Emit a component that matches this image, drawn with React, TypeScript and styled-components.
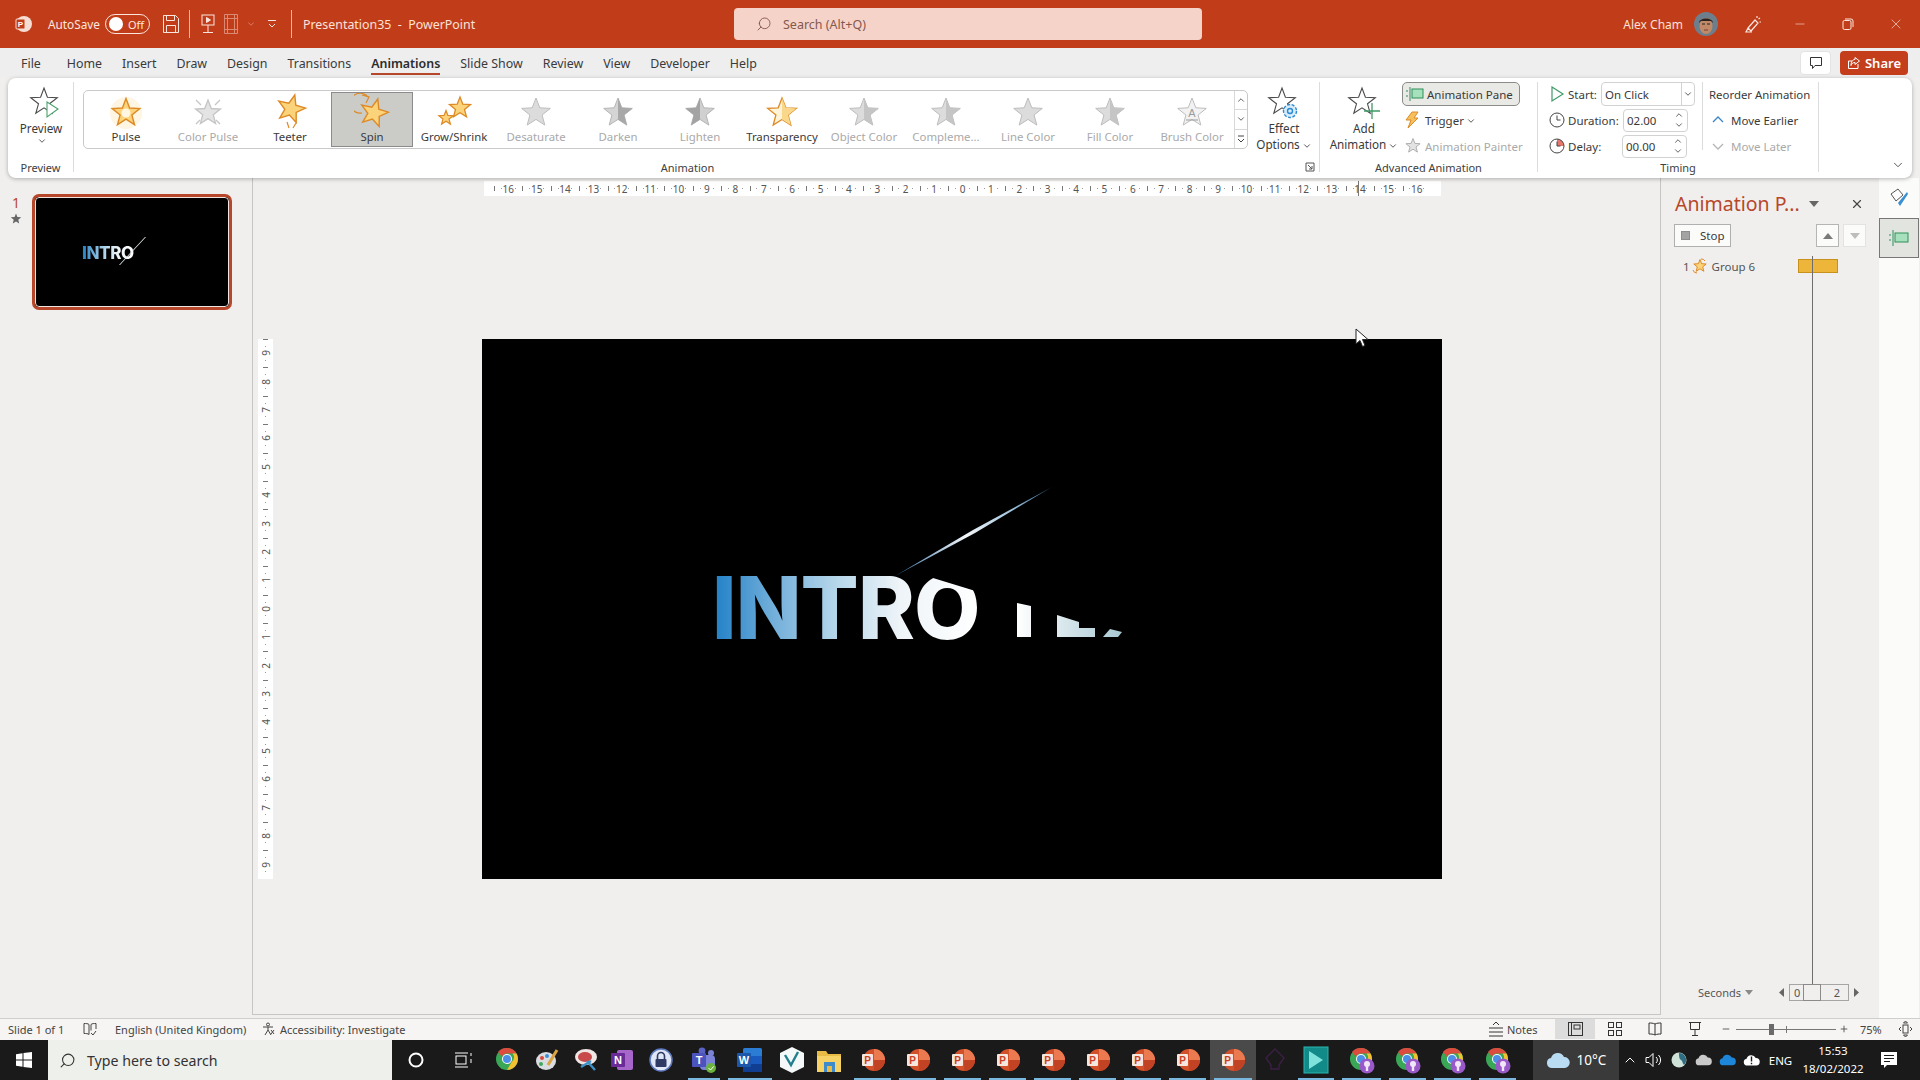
import React from "react";
import styled, { createGlobalStyle } from "styled-components";
import { Search, Minus, X, ChevronDown, ChevronUp, Plus } from "lucide-react";

const FONT = `"Noto Sans", "Open Sans", "Liberation Sans", sans-serif`;
const RED = "#c13d19";
const ACCENT = "#b7472a";
const INK = "#3a3a3a";
const MUTED = "#a9a9a9";

const Global = createGlobalStyle`
  html, body { margin: 0; padding: 0; background: #f0efed; }
  body { font-family: ${FONT}; font-size: 12px; color: ${INK}; overflow: hidden; }
  #root { width: 1920px; height: 1080px; }
  * { box-sizing: border-box; }
`;

const Page = styled.div`
  width: 1920px;
  height: 1080px;
  display: flex;
  flex-direction: column;
  background: #f0efed;
`;

/* ---------- Title bar ---------- */
const TitleBar = styled.header`
  height: 48px;
  flex: none;
  background: ${RED};
  color: #fbe6df;
  display: grid;
  grid-template-columns: 734px 468px 1fr;
  align-items: center;
`;
const TitleLeft = styled.div`
  display: flex;
  align-items: center;
  height: 100%;
  padding-left: 14px;
`;
const AutoSave = styled.span`
  margin: 0 7px 0 14px;
  font-size: 11.8px;
  width: 50px;
  white-space: nowrap;
`;
const Toggle = styled.div`
  width: 45px;
  height: 20px;
  border: 1px solid #fbe6df;
  border-radius: 10px;
  display: flex;
  align-items: center;
  gap: 5px;
  padding-left: 3px;
  font-size: 11px;
  margin-right: 10px;
`;
const ToggleKnob = styled.i`
  width: 14px;
  height: 14px;
  border-radius: 50%;
  background: #fff;
`;
const TitleCell = styled.div<{ $w: number; $dim?: boolean }>`
  width: ${(p) => p.$w}px;
  height: 100%;
  flex: none;
  display: flex;
  align-items: center;
  justify-content: center;
  opacity: ${(p) => (p.$dim ? 0.45 : 1)};
`;
const TitleDivider = styled.i<{ $mx: string }>`
  width: 1px;
  height: 28px;
  background: #eeb7a6;
  margin: ${(p) => p.$mx};
`;
const DocName = styled.span`
  font-size: 12.4px;
  white-space: pre;
  color: #fbe1d8;
`;
const SearchBox = styled.div`
  height: 32px;
  background: #f6d3c9;
  border-radius: 4px;
  display: flex;
  align-items: center;
  gap: 11px;
  padding-left: 22px;
  color: #84594e;
  font-size: 12.5px;
`;
const TitleRight = styled.div`
  display: flex;
  justify-content: flex-end;
  align-items: center;
  height: 100%;
`;
const UserName = styled.span`
  font-size: 12px;
  margin-right: 11px;
  color: #fbe1d8;
`;
const Avatar = styled.div`
  width: 24px;
  height: 24px;
  margin-right: 12px;
  border-radius: 50%;
  overflow: hidden;
  flex: none;
`;

/* ---------- Tabs ---------- */
const TabRow = styled.nav`
  height: 30px;
  flex: none;
  background: #eeeeee;
  display: flex;
  align-items: center;
  padding: 0 12px 0 11px;
`;
const Tab = styled.div<{ $active?: boolean }>`
  position: relative;
  height: 100%;
  display: flex;
  align-items: center;
  padding: 0 10px;
  font-size: 12.4px;
  font-weight: ${(p) => (p.$active ? 600 : 400)};
  color: ${(p) => (p.$active ? "#2c2c2c" : INK)};
  &:first-child {
    margin-right: 6px;
  }
  &::after {
    content: "";
    display: ${(p) => (p.$active ? "block" : "none")};
    position: absolute;
    left: 10px;
    right: 10px;
    bottom: 3px;
    height: 2px;
    background: ${ACCENT};
  }
`;
const TabActions = styled.div`
  margin-left: auto;
  display: flex;
  gap: 9px;
  align-items: center;
`;
const CommentButton = styled.button`
  width: 31px;
  height: 24px;
  padding: 0;
  background: #fff;
  border: 1px solid #e3e3e3;
  border-radius: 4px;
  display: flex;
  align-items: center;
  justify-content: center;
`;
const ShareButton = styled.button`
  width: 68px;
  height: 24px;
  padding: 0;
  background: #c43e1c;
  border: 0;
  border-radius: 4px;
  color: #fff;
  font: 600 13px ${FONT};
  display: flex;
  align-items: center;
  justify-content: center;
  gap: 4px;
`;

/* ---------- Ribbon ---------- */
const Ribbon = styled.section`
  position: relative;
  z-index: 2;
  height: 100px;
  flex: none;
  margin: 0 8px;
  padding: 4px 0 6px;
  background: #fff;
  border-radius: 8px;
  box-shadow: 0 1px 4px rgba(0, 0, 0, 0.28);
  display: flex;
`;
const Group = styled.div<{ $w: number }>`
  width: ${(p) => p.$w}px;
  flex: none;
  border-right: 1px solid #dcdcdc;
  display: flex;
  flex-direction: column;
`;
const GroupBody = styled.div<{ $pad?: string }>`
  flex: 1;
  display: flex;
  padding: ${(p) => p.$pad || 0};
  min-height: 0;
`;
const GroupFoot = styled.div`
  height: 16px;
  margin-bottom: -3px;
  display: flex;
  align-items: center;
`;
const GroupLabel = styled.span`
  flex: 1;
  text-align: center;
  font-size: 11px;
  color: #404040;
`;
const Launcher = styled.div`
  width: 18px;
  flex: none;
  display: flex;
  justify-content: center;
`;
const LargeButton = styled.div<{ $w: number; $ml?: number; $mt?: number }>`
  width: ${(p) => p.$w}px;
  margin-left: ${(p) => p.$ml || 0}px;
  margin-top: ${(p) => p.$mt || 0}px;
  flex: none;
  display: flex;
  flex-direction: column;
  align-items: center;
  font-size: 11.7px;
  line-height: 16px;
  color: ${INK};
  white-space: nowrap;
`;
const LargeIcon = styled.div`
  height: 38px;
  padding-top: 1px;
  display: flex;
  align-items: center;
  justify-content: center;
`;
const Caret = styled.span`
  display: inline-flex;
  vertical-align: middle;
  margin-left: 2px;
`;
const Gallery = styled.div`
  width: 1165px;
  height: 59px;
  flex: none;
  border: 1px solid #c9c9c9;
  border-radius: 5px;
  display: flex;
  align-items: center;
  padding-left: 1px;
`;
const GalleryItem = styled.div<{ $selected?: boolean; $off?: boolean }>`
  width: 82px;
  height: 55px;
  flex: none;
  display: flex;
  flex-direction: column;
  align-items: center;
  justify-content: flex-end;
  padding-bottom: 1px;
  font-size: 11.4px;
  line-height: 16px;
  white-space: nowrap;
  color: ${(p) => (p.$off ? MUTED : INK)};
  background: ${(p) => (p.$selected ? "#cbccc8" : "transparent")};
  border: 1px solid ${(p) => (p.$selected ? "#8b8b8b" : "transparent")};
`;
const GalleryScroll = styled.div`
  margin-left: auto;
  width: 13px;
  height: 100%;
  flex: none;
  display: flex;
  flex-direction: column;
  border-left: 1px solid #d8d8d8;
`;
const ScrollCell = styled.div`
  flex: 1;
  display: flex;
  align-items: center;
  justify-content: center;
  color: #444;
  & + & {
    border-top: 1px solid #d8d8d8;
  }
`;
const RowStack = styled.div<{ $ml?: number }>`
  display: flex;
  flex-direction: column;
  gap: 2px;
  margin-left: ${(p) => p.$ml || 0}px;
`;
const PaneButton = styled.div`
  width: 118px;
  height: 24px;
  flex: none;
  background: #e9e9e5;
  border: 1px solid #8b8b8b;
  border-radius: 5px;
  display: flex;
  align-items: center;
  gap: 3px;
  padding-left: 3px;
  font-size: 11.5px;
  white-space: nowrap;
`;
const CmdRow = styled.div<{ $off?: boolean; $gap?: number }>`
  height: 24px;
  flex: none;
  display: flex;
  align-items: center;
  gap: ${(p) => p.$gap ?? 4}px;
  padding-left: 3px;
  font-size: 11.5px;
  white-space: nowrap;
  color: ${(p) => (p.$off ? MUTED : INK)};
`;
const TimingLabel = styled.div<{ $w: number }>`
  width: ${(p) => p.$w}px;
  flex: none;
  height: 24px;
  display: flex;
  align-items: center;
  gap: 3px;
  font-size: 11.5px;
  white-space: nowrap;
`;
const TimingRow = styled.div`
  display: flex;
  height: 24px;
  flex: none;
  align-items: center;
`;
const SelectBox = styled.div`
  width: 94px;
  height: 24px;
  border: 1px solid #d2d2d2;
  border-radius: 4px;
  display: flex;
  align-items: center;
  padding-left: 3px;
  font-size: 11.5px;
`;
const SelectArrow = styled.div`
  margin-left: auto;
  width: 13px;
  height: 100%;
  border-left: 1px solid #d2d2d2;
  display: flex;
  align-items: center;
  justify-content: center;
`;
const NumField = styled.div`
  width: 65px;
  height: 23px;
  border: 1px solid #d2d2d2;
  border-radius: 4px;
  display: flex;
  align-items: center;
  padding-left: 3px;
  font-size: 11.5px;
`;
const Spin = styled.div`
  margin-left: auto;
  width: 16px;
  display: flex;
  flex-direction: column;
  align-items: center;
  color: #444;
`;
const ReorderStack = styled.div`
  margin-left: 7px;
  height: 68px;
  padding-left: 6px;
  border-left: 1px solid #dcdcdc;
  display: flex;
  flex-direction: column;
  gap: 2px;
`;
const ReorderTitle = styled.div`
  height: 24px;
  flex: none;
  display: flex;
  align-items: center;
  font-size: 11.4px;
  white-space: nowrap;
`;
const CollapseBtn = styled.div`
  position: absolute;
  right: 7px;
  bottom: 6px;
  display: flex;
  color: #444;
`;

/* ---------- Main area ---------- */
const Main = styled.main`
  flex: 1;
  display: flex;
  min-height: 0;
`;
const ThumbPanel = styled.aside`
  width: 252px;
  flex: none;
  display: flex;
  align-items: flex-start;
  padding: 16px 0 0 9px;
  gap: 9px;
`;
const ThumbMeta = styled.div`
  width: 14px;
  display: flex;
  flex-direction: column;
  align-items: center;
  color: ${ACCENT};
  font-size: 14px;
  line-height: 18px;
  gap: 1px;
`;
const Thumb = styled.div`
  position: relative;
  width: 200px;
  height: 116px;
  border: 3px solid ${ACCENT};
  border-radius: 7px;
  background: #000;
  overflow: hidden;
  &::after {
    content: "";
    position: absolute;
    inset: 0;
    border: 1px solid #f4e6e0;
    border-radius: 4px;
  }
`;
const gradient = `linear-gradient(90deg, #1f7fc6 0%, #6fadd9 22%, #b5d6ea 46%, #eef4f8 70%, #fff 100%)`;
const ThumbText = styled.span`
  position: absolute;
  left: 47px;
  top: 46px;
  font: 800 17px/20px Inter, "Liberation Sans", sans-serif;
  letter-spacing: -0.4px;
  background: ${gradient};
  -webkit-background-clip: text;
  background-clip: text;
  color: transparent;
`;
const Overlay = styled.svg`
  position: absolute;
  inset: 0;
  width: 100%;
  height: 100%;
`;
const Editor = styled.div`
  position: relative;
  width: 1409px;
  flex: none;
  margin-bottom: 3px;
  padding-top: 3px;
  border-left: 1px solid #c6c6c4;
  border-right: 1px solid #c6c6c4;
  border-bottom: 1px solid #c6c6c4;
`;
const HRuler = styled.div`
  position: relative;
  margin-left: 231px;
  width: 957px;
  height: 15px;
  background: #fff;
  display: flex;
  justify-content: center;
`;
const HCell = styled.span`
  width: 28.4px;
  flex: none;
  text-align: center;
  font-size: 10px;
  line-height: 16px;
  color: #555;
  background:
    linear-gradient(#777, #777) left 5px / 1px 5px no-repeat,
    linear-gradient(#999, #999) 25% 7px / 1px 1px no-repeat,
    linear-gradient(#999, #999) 75% 7px / 1px 1px no-repeat;
`;
const RulerMark = styled.i`
  position: absolute;
  left: 874px;
  top: 0;
  width: 1px;
  height: 15px;
  background: #777;
`;
const ViewRow = styled.div`
  display: flex;
  margin-top: 143px;
`;
const VRuler = styled.div`
  margin-left: 5px;
  width: 15px;
  height: 540px;
  background: #fff;
  display: flex;
  flex-direction: column;
`;
const VCell = styled.span`
  height: 28.42px;
  flex: none;
  display: flex;
  align-items: center;
  justify-content: center;
  font-size: 10px;
  color: #555;
  background:
    linear-gradient(#777, #777) 5px top / 5px 1px no-repeat,
    linear-gradient(#999, #999) 7px 25% / 1px 1px no-repeat,
    linear-gradient(#999, #999) 7px 75% / 1px 1px no-repeat;
  & > b {
    font-weight: 400;
    transform: rotate(-90deg);
  }
`;
const Slide = styled.div`
  position: relative;
  margin-left: 209px;
  width: 960px;
  height: 540px;
  background: #000;
  overflow: hidden;
`;
const SlideText = styled.span`
  position: absolute;
  left: 230px;
  top: 226px;
  font: 800 86px/86px Inter, "Liberation Sans", sans-serif;
  letter-spacing: -0.9px;
  background: ${gradient};
  -webkit-background-clip: text;
  background-clip: text;
  color: transparent;
`;
const Cursor = styled.svg`
  position: absolute;
  left: 1102px;
  top: 150px;
`;
const AnimPane = styled.aside`
  position: relative;
  width: 218px;
  flex: none;
  padding-bottom: 17px;
  display: flex;
  flex-direction: column;
`;
const PaneHead = styled.div`
  height: 46px;
  padding: 5px 0 0 14px;
  display: flex;
  align-items: center;
`;
const PaneTitle = styled.span`
  font-size: 19.5px;
  color: ${ACCENT};
  white-space: nowrap;
  width: 134px;
`;
const PaneClose = styled.span`
  margin-left: 31px;
  display: flex;
  color: #444;
`;
const PaneTools = styled.div`
  display: flex;
  padding: 0 13px 0 13px;
  align-items: center;
`;
const StopButton = styled.div`
  width: 58px;
  height: 23px;
  border: 1px solid #b0b0b0;
  background: #fbfbfa;
  display: flex;
  align-items: center;
  gap: 10px;
  padding-left: 6px;
  font-size: 11.5px;
`;
const StopSquare = styled.i`
  width: 9px;
  height: 9px;
  background: #a3a3a3;
  border: 1px solid #8d8d8d;
`;
const ArrowButton = styled.div<{ $off?: boolean; $ml?: number }>`
  width: 23px;
  height: 23px;
  margin-left: ${(p) => p.$ml || 0}px;
  background: #fbfbfa;
  border: 1px solid ${(p) => (p.$off ? "#e3e3e3" : "#b5b5b5")};
  display: flex;
  align-items: center;
  justify-content: center;
`;
const PaneRow = styled.div`
  margin-top: 8px;
  height: 22px;
  display: flex;
  align-items: center;
  padding-left: 22px;
  font-size: 11.5px;
  color: #555;
`;
const PaneIndex = styled.span`
  margin-right: 1px;
`;
const PaneItem = styled.span`
  margin-left: 5px;
  width: 86px;
`;
const TimeBar = styled.i`
  width: 40px;
  height: 14px;
  background: #edb63a;
  border: 1px solid #c8901c;
`;
const TimeLine = styled.i`
  position: absolute;
  left: 151px;
  top: 78px;
  width: 1px;
  bottom: 33px;
  background: #6e6e6e;
`;
const PaneFoot = styled.div`
  margin-top: auto;
  height: 18px;
  display: flex;
  align-items: center;
  padding-left: 37px;
  font-size: 11px;
  color: #555;
`;
const SecondsCaret = styled.svg`
  margin: 0 26px 0 4px;
`;
const TimeScale = styled.div`
  position: relative;
  width: 60px;
  height: 17px;
  margin: 0 5px;
  background: #f0efed;
  border: 1px solid #a5a5a5;
  display: flex;
  align-items: center;
  justify-content: space-between;
  padding: 0 8px 0 4px;
  font-size: 11px;
  &::after {
    content: "";
    position: absolute;
    left: 13px;
    top: -1px;
    bottom: -1px;
    width: 16px;
    border: 1px solid #8a8a8a;
  }
`;
const SideStrip = styled.aside`
  width: 40px;
  flex: none;
  background: #fbfbf9;
  display: flex;
  flex-direction: column;
`;
const StripTool = styled.div<{ $active?: boolean }>`
  height: 40px;
  background: ${(p) => (p.$active ? "#e2e5df" : "transparent")};
  border: 1px solid ${(p) => (p.$active ? "#777" : "transparent")};
  display: flex;
  align-items: center;
  justify-content: center;
`;

/* ---------- Status bar ---------- */
const StatusBar = styled.footer`
  height: 22px;
  flex: none;
  background: #f6f5f3;
  border-top: 1px solid #cfcfcd;
  display: flex;
  align-items: center;
  font-size: 11px;
  color: #444;
  padding: 0 3px 1px 8px;
`;
const StatusText = styled.span<{ $ml?: number; $w?: number }>`
  margin-left: ${(p) => p.$ml || 0}px;
  ${(p) => (p.$w ? `width: ${p.$w}px;` : "")}
  white-space: nowrap;
`;
const StatusIcon = styled.span<{ $w: number; $active?: boolean }>`
  width: ${(p) => p.$w}px;
  height: 100%;
  flex: none;
  display: flex;
  align-items: center;
  justify-content: center;
  background: ${(p) => (p.$active ? "#dcdcdc" : "transparent")};
`;
const StatusRight = styled.div`
  margin-left: auto;
  height: 100%;
  display: flex;
  align-items: center;
`;
const Slider = styled.div`
  position: relative;
  width: 100px;
  height: 1px;
  background: #777;
  &::before {
    content: "";
    position: absolute;
    left: 33px;
    top: -5px;
    width: 5px;
    height: 11px;
    background: #6a6a6a;
  }
  &::after {
    content: "";
    position: absolute;
    left: 50px;
    top: -3px;
    width: 1px;
    height: 7px;
    background: #777;
  }
`;

/* ---------- Taskbar ---------- */
const Taskbar = styled.div`
  height: 40px;
  flex: none;
  background: #1a1a1a;
  display: flex;
  align-items: stretch;
  color: #fff;
`;
const TaskSearch = styled.div`
  width: 344px;
  flex: none;
  background: #eef0ec;
  color: #333;
  display: flex;
  align-items: center;
  gap: 11px;
  padding-left: 11px;
  font-size: 14.2px;
`;
const TaskCell = styled.div<{ $w: number; $run?: boolean; $active?: boolean }>`
  position: relative;
  width: ${(p) => p.$w}px;
  flex: none;
  display: flex;
  align-items: center;
  justify-content: center;
  background: ${(p) => (p.$active ? "#4a4a4a" : "transparent")};
  &::after {
    content: "";
    display: ${(p) => (p.$run ? "block" : "none")};
    position: absolute;
    left: 4px;
    right: 4px;
    bottom: 0;
    height: 2px;
    background: #7ab8e0;
  }
`;
const Weather = styled.div`
  width: 86px;
  margin-left: 13px;
  flex: none;
  background: #3a3a3a;
  display: flex;
  align-items: center;
  justify-content: center;
  gap: 7px;
  font-size: 13.5px;
`;
const TrayCell = styled.div<{ $w: number }>`
  width: ${(p) => p.$w}px;
  flex: none;
  display: flex;
  align-items: center;
  justify-content: center;
  font-size: 11.5px;
`;
const Clock = styled.div`
  width: 70px;
  flex: none;
  display: flex;
  flex-direction: column;
  justify-content: center;
  align-items: center;
  font-size: 11.5px;
  line-height: 18px;
`;

/* ---------- Drawn icons ---------- */
const ptList = (cx: number, cy: number, R: number, r: number, rot = 0) =>
  Array.from({ length: 10 }, (_, i) => {
    const a = ((-90 + rot + i * 36) * Math.PI) / 180;
    const rad = i % 2 ? r : R;
    return `${(cx + rad * Math.cos(a)).toFixed(1)},${(cy + rad * Math.sin(a)).toFixed(1)}`;
  });
const pts = (cx: number, cy: number, R: number, r: number, rot = 0) => ptList(cx, cy, R, r, rot).join(" ");

const ORANGE = { fill: "#fbd37a", stroke: "#dd8a26" };
const GRAY = { fill: "#dcdcdc", stroke: "#bdbdbd" };
const BASE = ptList(18, 20, 15, 6.4);
const RIGHT_HALF = BASE.slice(0, 6).join(" ");
const LEFT_HALF = [BASE[0], ...BASE.slice(5)].join(" ");

const StarGlyph = ({ kind }: { kind: string }) => {
  switch (kind) {
    case "pulse":
      return (
        <svg width="36" height="36">
          <circle cx="18" cy="20" r="16" fill="#fdf1d6" opacity={0.7} />
          <polygon points={pts(18, 20, 14.5, 6.2)} fill={ORANGE.fill} stroke={ORANGE.stroke} strokeWidth="1.4" />
          <circle cx="18" cy="20" r="4.5" fill="#fff7e2" />
        </svg>
      );
    case "colorPulse":
      return (
        <svg width="36" height="36" stroke="#c5c5c5" strokeWidth="1.3">
          <polygon points={pts(18, 20, 13, 5.6)} fill="#e4e4e4" />
          <path d="M6 7l5 5M30 7l-5 5M6 31l4-4M30 31l-4-4" fill="none" />
        </svg>
      );
    case "teeter":
      return (
        <svg width="36" height="36">
          <polygon points={pts(19, 16, 14.5, 6.2, 15)} fill={ORANGE.fill} stroke={ORANGE.stroke} strokeWidth="1.4" />
          <path d="M15 29l2 6M24 30l-3 5" stroke={ORANGE.stroke} strokeWidth="1.2" fill="none" />
        </svg>
      );
    case "spin":
      return (
        <svg width="36" height="36">
          <path d="M14 4 a10 10 0 1 0 -6 16" fill="none" stroke={ORANGE.stroke} strokeWidth="1.2" />
          <path d="M8 2 l7 2 -3 6" fill="none" stroke={ORANGE.stroke} strokeWidth="1.2" />
          <polygon points={pts(20, 20, 14.5, 6.2, 15)} fill={ORANGE.fill} stroke={ORANGE.stroke} strokeWidth="1.4" />
        </svg>
      );
    case "grow":
      return (
        <svg width="36" height="36">
          <polygon points={pts(24, 15, 11, 4.7)} fill={ORANGE.fill} stroke={ORANGE.stroke} strokeWidth="1.3" />
          <polygon points={pts(10, 25, 7.5, 3.2)} fill={ORANGE.fill} stroke={ORANGE.stroke} strokeWidth="1.2" />
        </svg>
      );
    case "transparency":
      return (
        <svg width="36" height="36">
          <polygon points={BASE.join(" ")} fill="#fff3d8" stroke={ORANGE.stroke} strokeWidth="1.3" />
          <polygon points={RIGHT_HALF} fill="#f9d88c" />
        </svg>
      );
    case "darken":
      return (
        <svg width="36" height="36">
          <polygon points={BASE.join(" ")} fill="#d5d5d5" stroke="#b5b5b5" />
          <polygon points={RIGHT_HALF} fill="#a8a8a8" />
        </svg>
      );
    case "lighten":
      return (
        <svg width="36" height="36">
          <polygon points={BASE.join(" ")} fill="#d0d0d0" stroke="#b5b5b5" />
          <polygon points={LEFT_HALF} fill="#a3a3a3" />
        </svg>
      );
    case "brush":
      return (
        <svg width="36" height="36">
          <polygon points={BASE.join(" ")} fill="#f2f2f2" stroke="#bdbdbd" />
          <text x="18" y="24" textAnchor="middle" fontSize="11" fontFamily="Liberation Sans" fill="#9b9b9b">A</text>
          <path d="M12 27h12" stroke="#9b9b9b" />
        </svg>
      );
    default:
      return (
        <svg width="36" height="36">
          <polygon points={BASE.join(" ")} fill={GRAY.fill} stroke={GRAY.stroke} />
          {kind === "half" && <polygon points={RIGHT_HALF} fill="#c5c5c5" />}
        </svg>
      );
  }
};

const CommandStar = ({ over, cx = 18 }: { over?: React.ReactNode; cx?: number }) => (
  <svg width="40" height="36">
    <polygon points={pts(cx, 18, 14, 5.8)} fill="#fff" stroke="#4a4a4a" strokeWidth="1.1" />
    {over}
  </svg>
);

const Tiny = ({ up }: { up?: boolean }) =>
  up ? <ChevronUp size={10} strokeWidth={2} /> : <ChevronDown size={10} strokeWidth={2} />;

const PptBall = () => (
  <svg width="24" height="26" viewBox="0 0 24 26">
    <circle cx="13" cy="13" r="11" fill="#d2502a" />
    <path d="M13 2a11 11 0 0 1 11 11H13z" fill="#ec7a50" />
    <path d="M13 13h11a11 11 0 0 1-11 11z" fill="#c24324" />
    <rect x="1" y="7" width="11" height="12" rx="1" fill="#f5e6de" />
    <text x="6.5" y="17" textAnchor="middle" fontSize="10" fontWeight="700" fontFamily="Liberation Sans" fill="#c9411f">P</text>
  </svg>
);

const ChromeBall = ({ badge }: { badge?: boolean }) => (
  <svg width="26" height="28" viewBox="0 0 26 28">
    <circle cx="12" cy="13" r="11" fill="#3aa757" />
    <path d="M12 2a11 11 0 0 1 9.5 5.5H12a5.5 5.5 0 0 0-5 3.2L3 6a11 11 0 0 1 9-4z" fill="#dd4b3e" />
    <path d="M21.5 7.5A11 11 0 0 1 12 24l4.8-8.2a5.5 5.5 0 0 0 .7-8.3z" fill="#f2c230" />
    <circle cx="12" cy="13" r="5" fill="#fff" />
    <circle cx="12" cy="13" r="4" fill="#4c8ee8" />
    {badge && (
      <>
        <circle cx="18" cy="20" r="7.5" fill="#9a59c9" />
        <circle cx="18" cy="18" r="3" fill="#f1e6f7" />
        <rect x="16.8" y="20" width="2.4" height="5" fill="#f1e6f7" />
      </>
    )}
  </svg>
);

const CloudShape = ({ w, fill }: { w: number; fill: string }) => (
  <svg width={w} height={(w * 2) / 3} viewBox="0 0 24 16">
    <path d="M6 16a5 5 0 0 1-1-9.9A7 7 0 0 1 18 5a5.5 5.5 0 0 1 .5 11z" fill={fill} />
  </svg>
);

const tasks: { w: number; run?: boolean; active?: boolean; icon: React.ReactNode }[] = [
  { w: 48, icon: <svg width="20" height="20"><circle cx="10" cy="10" r="6.5" fill="none" stroke="#fff" strokeWidth="2" /></svg> },
  { w: 46, icon: <svg width="20" height="20" stroke="#fff" fill="none"><rect x="3" y="6" width="10" height="8" /><path d="M2 3h13M2 17h13M18 3v3M18 9v4" /></svg> },
  { w: 44, icon: <ChromeBall /> },
  { w: 34, icon: <svg width="26" height="26" viewBox="0 0 26 26"><ellipse cx="12" cy="14" rx="10" ry="9" fill="#d9dde2" /><circle cx="8" cy="11" r="2" fill="#d6493a" /><circle cx="13" cy="9" r="2" fill="#3f8ed6" /><circle cx="7" cy="17" r="2" fill="#3fa85a" /><path d="M14 18L23 3" stroke="#d9a441" strokeWidth="3" /></svg> },
  { w: 44, icon: <svg width="26" height="26" viewBox="0 0 26 26"><ellipse cx="13" cy="10" rx="11" ry="8" fill="#f0e6e4" /><ellipse cx="12" cy="10" rx="7" ry="5" fill="#c94a4a" /><path d="M14 14l8 9M8 20l10-6" stroke="#3d93c9" strokeWidth="2.4" /></svg> },
  { w: 30, icon: <svg width="24" height="24" viewBox="0 0 24 24"><rect x="6" y="2" width="16" height="20" rx="2" fill="#a766c9" /><rect x="0" y="5" width="14" height="14" rx="1" fill="#6a2b96" /><text x="7" y="16" textAnchor="middle" fontSize="11" fontWeight="700" fontFamily="Liberation Sans" fill="#fff">N</text></svg> },
  { w: 46, icon: <svg width="24" height="26" viewBox="0 0 24 26"><circle cx="12" cy="13" r="11" fill="#dfe6f5" stroke="#5d78c0" strokeWidth="1.5" /><rect x="6.5" y="12" width="11" height="8" rx="1" fill="#2e3a63" /><path d="M8.5 12V9a3.5 3.5 0 0 1 7 0v3" fill="none" stroke="#2e3a63" strokeWidth="1.6" /></svg> },
  { w: 40, run: true, icon: <svg width="26" height="28" viewBox="0 0 26 28"><circle cx="20" cy="7" r="3" fill="#7b83d8" /><circle cx="11" cy="5" r="3.4" fill="#5a62c3" /><rect x="9" y="9" width="15" height="15" rx="4" fill="#7b83d8" /><rect x="1" y="7" width="14" height="14" rx="1" fill="#4b53bc" /><text x="8" y="18" textAnchor="middle" fontSize="11" fontWeight="700" fontFamily="Liberation Sans" fill="#fff">T</text><circle cx="20" cy="22" r="5" fill="#6bb33e" /><path d="M17.5 22l2 2 3.2-3.6" stroke="#fff" fill="none" /></svg> },
  { w: 52, run: true, icon: <svg width="26" height="26" viewBox="0 0 26 26"><rect x="6" y="1" width="19" height="24" rx="1.5" fill="#2b7cd3" /><rect x="6" y="9" width="19" height="8" fill="#185abd" /><rect x="6" y="17" width="19" height="8" fill="#103f91" /><rect x="0" y="6" width="14" height="14" rx="1" fill="#1c57ac" /><text x="7" y="17" textAnchor="middle" fontSize="11" fontWeight="700" fontFamily="Liberation Sans" fill="#fff">W</text></svg> },
  { w: 32, icon: <svg width="26" height="28" viewBox="0 0 26 28"><polygon points="13,1 25,7 25,21 13,27 1,21 1,7" fill="#f4f8f8" /><path d="M6 9l6 10 7-13" stroke="#22808e" strokeWidth="2.4" fill="none" /></svg> },
  { w: 42, icon: <svg width="26" height="26" viewBox="0 0 26 26"><path d="M1 4h9l2 3h13v18H1z" fill="#e8bb47" /><rect x="1" y="9" width="24" height="16" fill="#f5d166" /><rect x="8" y="15" width="11" height="10" fill="#3f8ac9" /><rect x="11" y="19" width="5" height="6" fill="#e8bb47" /></svg> },
  ...Array.from({ length: 8 }, () => ({ w: 45, run: true, icon: <PptBall /> })),
  { w: 46, run: true, active: true, icon: <PptBall /> },
  { w: 38, icon: <svg width="22" height="26" viewBox="0 0 22 26" fill="none" stroke="#3c1f45" strokeWidth="1.4"><path d="M11 2l9 9-5 7v4H7v-4l-5-7z" /></svg> },
  { w: 44, run: true, icon: <svg width="26" height="28" viewBox="0 0 26 28"><rect x="1" y="1" width="24" height="26" fill="#128a88" stroke="#2bb8b0" /><polygon points="6,5 20,14 6,23" fill="#7fe3dc" /></svg> },
  { w: 47, run: true, icon: <ChromeBall badge /> },
  { w: 45, run: true, icon: <ChromeBall badge /> },
  { w: 45, run: true, icon: <ChromeBall badge /> },
  { w: 45, run: true, icon: <ChromeBall badge /> },
];

const galleryItems: [string, string, boolean, boolean?][] = [
  ["Pulse", "pulse", false],
  ["Color Pulse", "colorPulse", true],
  ["Teeter", "teeter", false],
  ["Spin", "spin", false, true],
  ["Grow/Shrink", "grow", false],
  ["Desaturate", "plain", true],
  ["Darken", "darken", true],
  ["Lighten", "lighten", true],
  ["Transparency", "transparency", false],
  ["Object Color", "half", true],
  ["Compleme...", "half", true],
  ["Line Color", "plain", true],
  ["Fill Color", "half", true],
  ["Brush Color", "brush", true],
];

const tabs = ["File", "Home", "Insert", "Draw", "Design", "Transitions", "Animations", "Slide Show", "Review", "View", "Developer", "Help"];
const hNums = [...Array.from({ length: 17 }, (_, i) => 16 - i), ...Array.from({ length: 16 }, (_, i) => i + 1)];
const vNums = [...Array.from({ length: 10 }, (_, i) => 9 - i), ...Array.from({ length: 9 }, (_, i) => i + 1)];

const StreakStops = () => (
  <>
    <stop offset="0" stopColor="#2f6fa5" />
    <stop offset="0.45" stopColor="#f4f7f9" />
    <stop offset="0.75" stopColor="#9cc2dc" />
    <stop offset="1" stopColor="#24557f" />
  </>
);

export default function App() {
  return (
    <Page>
      <Global />
      <TitleBar>
        <TitleLeft>
          <TitleCell $w={20}>
            <svg width="18" height="18" viewBox="0 0 18 18"><circle cx="9" cy="9" r="8" fill="#f6ddd3" /><rect x="1" y="4" width="9" height="10" rx="1" fill={RED} stroke="#f6ddd3" /><text x="5.5" y="12" textAnchor="middle" fontSize="8" fontWeight="700" fontFamily="Liberation Sans" fill="#fff">P</text></svg>
          </TitleCell>
          <AutoSave>AutoSave</AutoSave>
          <Toggle><ToggleKnob />Off</Toggle>
          <TitleCell $w={22}>
            <svg width="16" height="18" viewBox="0 0 16 18" fill="none" stroke="#fbe6df"><path d="M.5.5h12l3 3v14H.5zM3.5.5v5h8v-5M3.5 17.5v-7h9v7" /></svg>
          </TitleCell>
          <TitleDivider $mx="0 7px 0 7px" />
          <TitleCell $w={22}>
            <svg width="16" height="20" viewBox="0 0 16 20" fill="none" stroke="#fbe6df"><rect x="2" y="1" width="12" height="10" /><path d="M8 11v7M3 18.5h10" /><path d="M6.5 3.5l4 2.5-4 2.5z" fill="#fbe6df" /></svg>
          </TitleCell>
          <TitleCell $w={24} $dim>
            <svg width="14" height="20" viewBox="0 0 14 20" fill="none" stroke="#fbe6df"><path d="M.5.5h13v19H.5zM3.5.5v19M10.5.5v19M.5 4.5h13M.5 15.5h13" /></svg>
          </TitleCell>
          <TitleCell $w={16} $dim><Tiny /></TitleCell>
          <TitleCell $w={25}>
            <svg width="10" height="10" viewBox="0 0 10 10" fill="none" stroke="#fbe6df"><path d="M1 1.5h8M2 5l3 3 3-3" /></svg>
          </TitleCell>
          <TitleDivider $mx="0 11px 0 7px" />
          <DocName>Presentation35  -  PowerPoint</DocName>
        </TitleLeft>
        <SearchBox>
          <Search size={16} strokeWidth={1.4} style={{ transform: "scaleX(-1)" }} />
          Search (Alt+Q)
        </SearchBox>
        <TitleRight>
          <UserName>Alex Cham</UserName>
          <Avatar>
            <svg width="24" height="24" viewBox="0 0 24 24"><rect width="24" height="24" fill="#6d7f8c" /><ellipse cx="12" cy="14" rx="6.5" ry="8" fill="#c08a68" /><path d="M5 11c0-6 14-6 14 0l-2-2H7z" fill="#2a2320" /><path d="M8 12h3M13 12h3" stroke="#2a2320" /><path d="M10 18h4" stroke="#7a3c2f" /></svg>
          </Avatar>
          <TitleCell $w={46}>
            <svg width="18" height="20" viewBox="0 0 18 20" fill="none" stroke="#fbe6df" strokeWidth="1.2"><path d="M11 6l-7 8 3 3 7-8zM4 14l-2 4h6M13 2v2M16 4l-1.5 1M17 8h-1.5" /></svg>
          </TitleCell>
          <TitleCell $w={48}><Minus size={14} strokeWidth={1} /></TitleCell>
          <TitleCell $w={48}>
            <svg width="12" height="12" viewBox="0 0 12 12" fill="none" stroke="#fbe6df"><rect x="1" y="2.5" width="8" height="9" rx="1.5" /><path d="M3 1h6a2 2 0 0 1 2 2v6" /></svg>
          </TitleCell>
          <TitleCell $w={48}><X size={16} strokeWidth={1} /></TitleCell>
        </TitleRight>
      </TitleBar>

      <TabRow>
        {tabs.map((t) => (
          <Tab key={t} $active={t === "Animations"}>{t}</Tab>
        ))}
        <TabActions>
          <CommentButton>
            <svg width="14" height="14" viewBox="0 0 14 14" fill="none" stroke="#333"><path d="M1.5 1.5h11v8H6l-2.5 3v-3h-2z" /></svg>
          </CommentButton>
          <ShareButton>
            <svg width="14" height="14" viewBox="0 0 14 14" fill="none" stroke="#fff"><path d="M11 8v4.5H1.5V5H5M8 1.5l4.5 3.5L8 8.5V6.5C6 6.5 4.5 7.5 4 9.5 4 6 5.5 3.5 8 3.5z" /></svg>
            Share
          </ShareButton>
        </TabActions>
      </TabRow>

      <Ribbon>
        <Group $w={66}>
          <GroupBody>
            <LargeButton $w={66}>
              <LargeIcon>
                <CommandStar cx={23} over={<polygon points="26,18 37,25 26,33" fill="#fff" stroke="#4aa36b" strokeWidth="1.1" />} />
              </LargeIcon>
              Preview
              <Caret><Tiny /></Caret>
            </LargeButton>
          </GroupBody>
          <GroupFoot><GroupLabel>Preview</GroupLabel></GroupFoot>
        </Group>

        <Group $w={1246}>
          <GroupBody $pad="8px 0 0 9px">
            <Gallery>
              {galleryItems.map(([label, kind, off, selected]) => (
                <GalleryItem key={label} $off={off} $selected={selected}>
                  <StarGlyph kind={kind} />
                  {label}
                </GalleryItem>
              ))}
              <GalleryScroll>
                <ScrollCell><Tiny up /></ScrollCell>
                <ScrollCell><Tiny /></ScrollCell>
                <ScrollCell>
                  <svg width="10" height="10" viewBox="0 0 10 10" fill="none" stroke="#444"><path d="M2 2h6M2 5l3 3 3-3" /></svg>
                </ScrollCell>
              </GalleryScroll>
            </Gallery>
            <LargeButton $w={60} $ml={6} $mt={-8}>
              <LargeIcon>
                <CommandStar over={<g fill="#d8ecfa" stroke="#2c8ad0" strokeWidth="1.4"><circle cx="26" cy="27" r="6.5" strokeDasharray="3 1.5" /><circle cx="26" cy="27" r="2.5" /></g>} />
              </LargeIcon>
              <span>Effect</span>
              <span>Options<Caret><Tiny /></Caret></span>
            </LargeButton>
          </GroupBody>
          <GroupFoot>
            <GroupLabel>Animation</GroupLabel>
            <Launcher>
              <svg width="10" height="10" viewBox="0 0 10 10" fill="none" stroke="#555"><path d="M1 9V1h8v8zM3 3l4 4M7 4v3H4" /></svg>
            </Launcher>
          </GroupFoot>
        </Group>

        <Group $w={218}>
          <GroupBody>
            <LargeButton $w={78} $ml={5}>
              <LargeIcon>
                <CommandStar over={<path d="M28 19v16M20 27h16" stroke="#3f9a67" strokeWidth="1.3" />} />
              </LargeIcon>
              <span>Add</span>
              <span>Animation<Caret><Tiny /></Caret></span>
            </LargeButton>
            <RowStack $ml={-1}>
              <PaneButton>
                <svg width="18" height="16" viewBox="0 0 18 16" fill="none"><rect x="6" y="3" width="11" height="9" fill="#a7e0bd" stroke="#2f8f5a" /><path d="M4 1v14M1 4v2M1 9v2" stroke="#2f8f5a" /></svg>
                Animation Pane
              </PaneButton>
              <CmdRow $gap={6}>
                <svg width="14" height="18" viewBox="0 0 14 18"><polygon points="7,1 13,1 9,7 13,7 3,17 6,9 1,9" fill="#f6c05c" stroke="#dc8a26" /></svg>
                <span>Trigger<Caret><Tiny /></Caret></span>
              </CmdRow>
              <CmdRow $off $gap={4}>
                <svg width="16" height="16" viewBox="0 0 16 16"><polygon points={pts(8, 8, 7.5, 3.2)} fill="#e3e3e3" stroke="#b0b0b0" /></svg>
                Animation Painter
              </CmdRow>
            </RowStack>
          </GroupBody>
          <GroupFoot><GroupLabel>Advanced Animation</GroupLabel></GroupFoot>
        </Group>

        <Group $w={281}>
          <GroupBody $pad="0 0 0 11px">
            <RowStack>
              <TimingRow>
                <TimingLabel $w={52}>
                  <svg width="16" height="18" viewBox="0 0 16 18"><polygon points="3,2 14,9 3,16" fill="#fff" stroke="#3f9a67" strokeWidth="1.2" /></svg>
                  Start:
                </TimingLabel>
                <SelectBox>On Click<SelectArrow><Tiny /></SelectArrow></SelectBox>
              </TimingRow>
              <TimingRow>
                <TimingLabel $w={74}>
                  <svg width="16" height="18" viewBox="0 0 16 18" fill="none" stroke="#444"><circle cx="8" cy="9" r="7" /><path d="M8 4.5V9h3.5" /></svg>
                  Duration:
                </TimingLabel>
                <NumField>02.00<Spin><Tiny up /><Tiny /></Spin></NumField>
              </TimingRow>
              <TimingRow>
                <TimingLabel $w={73}>
                  <svg width="16" height="18" viewBox="0 0 16 18" fill="none" stroke="#444"><path d="M8 9V2a7 7 0 0 1 7 7z" fill="#e8776b" stroke="none" /><circle cx="8" cy="9" r="7" /><path d="M8 4.5V9h3.5" /></svg>
                  Delay:
                </TimingLabel>
                <NumField>00.00<Spin><Tiny up /><Tiny /></Spin></NumField>
              </TimingRow>
            </RowStack>
            <ReorderStack>
              <ReorderTitle>Reorder Animation</ReorderTitle>
              <CmdRow $gap={7}>
                <svg width="12" height="12" viewBox="0 0 12 12" fill="none" stroke="#3a85c4" strokeWidth="1.3"><path d="M1 8l5-5 5 5" /></svg>
                Move Earlier
              </CmdRow>
              <CmdRow $off $gap={7}>
                <svg width="12" height="12" viewBox="0 0 12 12" fill="none" stroke="#b5b5b5" strokeWidth="1.3"><path d="M1 4l5 5 5-5" /></svg>
                Move Later
              </CmdRow>
            </ReorderStack>
          </GroupBody>
          <GroupFoot><GroupLabel>Timing</GroupLabel></GroupFoot>
        </Group>
        <CollapseBtn><ChevronDown size={14} strokeWidth={1.5} /></CollapseBtn>
      </Ribbon>

      <Main>
        <ThumbPanel>
          <ThumbMeta>
            <span>1</span>
            <svg width="12" height="12"><polygon points={pts(6, 6, 5.5, 2.4)} fill="#666" /></svg>
          </ThumbMeta>
          <Thumb>
            <ThumbText>INTRO</ThumbText>
            <Overlay viewBox="0 0 194 110">
              <polygon points="84,68 110,40 111,40 85,68" fill="#e8eef2" />
            </Overlay>
          </Thumb>
        </ThumbPanel>

        <Editor>
          <HRuler>
            {hNums.map((n, i) => <HCell key={i}>{n}</HCell>)}
            <RulerMark />
          </HRuler>
          <ViewRow>
            <VRuler>
              {vNums.map((n, i) => <VCell key={i}><b>{n}</b></VCell>)}
            </VRuler>
            <Slide>
              <SlideText>INTRO</SlideText>
              <Overlay viewBox="0 0 960 540">
                <defs>
                  <linearGradient id="frag" x1="535" x2="640" y1="0" y2="0" gradientUnits="userSpaceOnUse">
                    <stop offset="0" stopColor="#ffffff" />
                    <stop offset="1" stopColor="#a9c9d4" />
                  </linearGradient>
                  <linearGradient id="st" x1="413" y1="236" x2="570" y2="148" gradientUnits="userSpaceOnUse">
                    <StreakStops />
                  </linearGradient>
                </defs>
                <polygon points="441,228 500,228 500,254 451,239 441,236" fill="#000" />
                <polygon points="413,237 491,191 570,148 493,194" fill="url(#st)" />
                <polygon points="535,264 549,267 549,298 535,298" fill="url(#frag)" />
                <polygon points="575,276 597,283 597,289 613,289 613,298 575,298" fill="url(#frag)" />
                <polygon points="621,298 628,290 640,293 636,298" fill="url(#frag)" />
              </Overlay>
            </Slide>
          </ViewRow>
          <Cursor width="14" height="20" viewBox="0 0 14 20">
            <path d="M1 1v15l4-3.5 2.5 6 2.5-1-2.5-6H13z" fill="#fff" stroke="#222" />
          </Cursor>
        </Editor>

        <AnimPane>
          <PaneHead>
            <PaneTitle>Animation P...</PaneTitle>
            <svg width="10" height="6" viewBox="0 0 10 6"><polygon points="0,0 10,0 5,6" fill="#666" /></svg>
            <PaneClose><X size={14} strokeWidth={2} /></PaneClose>
          </PaneHead>
          <PaneTools>
            <StopButton><StopSquare />Stop</StopButton>
            <ArrowButton $ml={85}>
              <svg width="10" height="6" viewBox="0 0 10 6"><polygon points="0,6 10,6 5,0" fill="#7a7a7a" /></svg>
            </ArrowButton>
            <ArrowButton $off $ml={4}>
              <svg width="10" height="6" viewBox="0 0 10 6"><polygon points="0,0 10,0 5,6" fill="#bdbdbd" /></svg>
            </ArrowButton>
          </PaneTools>
          <PaneRow>
            <PaneIndex>1</PaneIndex>
            <svg width="16" height="16" viewBox="0 0 16 16"><polygon points={pts(9, 8, 6.5, 2.8)} fill="#fbd37a" stroke="#dd8a26" /><path d="M2 12a4 4 0 0 0 4 3M14 3a4 4 0 0 0-4-2" stroke="#dd8a26" fill="none" /></svg>
            <PaneItem>Group 6</PaneItem>
            <TimeBar />
          </PaneRow>
          <TimeLine />
          <PaneFoot>
            Seconds
            <SecondsCaret width="8" height="5" viewBox="0 0 8 5"><polygon points="0,0 8,0 4,5" fill="#8a8a8a" /></SecondsCaret>
            <svg width="5" height="9" viewBox="0 0 5 9"><polygon points="5,0 5,9 0,4.5" fill="#666" /></svg>
            <TimeScale><span>0</span><span>2</span></TimeScale>
            <svg width="5" height="9" viewBox="0 0 5 9"><polygon points="0,0 0,9 5,4.5" fill="#666" /></svg>
          </PaneFoot>
        </AnimPane>

        <SideStrip>
          <StripTool>
            <svg width="22" height="24" viewBox="0 0 22 24"><path d="M3 8l7-5 5 6-7 6z" fill="#fff" stroke="#555" /><path d="M12 20l8-12-1-2-9 11z" fill="#3a8fd0" /></svg>
          </StripTool>
          <StripTool $active>
            <svg width="20" height="16" viewBox="0 0 20 16" fill="none"><rect x="6" y="3" width="13" height="9" fill="#a7e0bd" stroke="#2f8f5a" /><path d="M4 0v16M1 4v2M1 9v2" stroke="#2f8f5a" /></svg>
          </StripTool>
        </SideStrip>
      </Main>

      <StatusBar>
        <StatusText $w={70}>Slide 1 of 1</StatusText>
        <StatusIcon $w={24}>
          <svg width="14" height="14" viewBox="0 0 14 14" fill="none" stroke="#444"><path d="M1 1.5c2 0 4 0 5 1v10c-1-1-3-1-5-1zM13 7V1.5c-2 0-4 0-5 1v6M8 11l2 2 3-4" /></svg>
        </StatusIcon>
        <StatusText $ml={13} $w={144}>English (United Kingdom)</StatusText>
        <StatusIcon $w={18}>
          <svg width="14" height="14" viewBox="0 0 14 14" fill="none" stroke="#444"><circle cx="7" cy="2.5" r="1.5" /><path d="M2 5h10M7 5v3l-3 5M7 8l3 5M10 8l3 4M13 8l-3 4" /></svg>
        </StatusIcon>
        <StatusText $ml={3}>Accessibility: Investigate</StatusText>
        <StatusRight>
          <StatusIcon $w={20}>
            <svg width="16" height="16" viewBox="0 0 16 16" fill="none" stroke="#333"><path d="M1 7h14M1 11h14M1 15h14M5 4l3-3 3 3" /></svg>
          </StatusIcon>
          <StatusText $ml={1} $w={48}>Notes</StatusText>
          <StatusIcon $w={40} $active>
            <svg width="15" height="14" viewBox="0 0 15 14" fill="none" stroke="#333"><rect x=".5" y=".5" width="14" height="13" /><path d="M3.5.5v13" /><rect x="6" y="3" width="6" height="4" /></svg>
          </StatusIcon>
          <StatusIcon $w={40}>
            <svg width="14" height="14" viewBox="0 0 14 14" fill="none" stroke="#333"><rect x=".5" y=".5" width="5" height="5" /><rect x="8.5" y=".5" width="5" height="5" /><rect x=".5" y="8.5" width="5" height="5" /><rect x="8.5" y="8.5" width="5" height="5" /></svg>
          </StatusIcon>
          <StatusIcon $w={40}>
            <svg width="14" height="14" viewBox="0 0 14 14" fill="none" stroke="#333"><path d="M7 2v11M7 2C5 1 3 1 1 1v11c2 0 4 0 6 1 2-1 4-1 6-1V1c-2 0-4 0-6 1z" /></svg>
          </StatusIcon>
          <StatusIcon $w={40}>
            <svg width="14" height="16" viewBox="0 0 14 16" fill="none" stroke="#333"><path d="M1 1.5h12M2.5 1.5v7h9v-7M7 8.5v6M4 14.5h6" /></svg>
          </StatusIcon>
          <StatusIcon $w={21}><Minus size={10} /></StatusIcon>
          <Slider />
          <StatusIcon $w={15}><Plus size={10} /></StatusIcon>
          <StatusText $ml={9} $w={33}>75%</StatusText>
          <StatusIcon $w={24}>
            <svg width="15" height="16" viewBox="0 0 15 16" fill="none" stroke="#444"><rect x="5" y="4" width="5" height="8" /><path d="M7.5 0l-2 2h4zM7.5 16l-2-2h4zM3 6L1 8l2 2M12 6l2 2-2 2" /></svg>
          </StatusIcon>
        </StatusRight>
      </StatusBar>

      <Taskbar>
        <TaskCell $w={48}>
          <svg width="16" height="16" viewBox="0 0 16 16" fill="#fff"><path d="M0 2.2L6.5 1.3v6.2H0zM7.5 1.1L16 0v7.5H7.5zM0 8.5h6.5v6.2L0 13.8zM7.5 8.5H16V16l-8.5-1.1z" /></svg>
        </TaskCell>
        <TaskSearch>
          <Search size={17} strokeWidth={1.5} style={{ transform: "scaleX(-1)" }} />
          Type here to search
        </TaskSearch>
        {tasks.map((t, i) => (
          <TaskCell key={i} $w={t.w} $run={t.run} $active={t.active}>{t.icon}</TaskCell>
        ))}
        <Weather><CloudShape w={24} fill="#b9dcf3" />10°C</Weather>
        <TrayCell $w={22}><ChevronUp size={16} strokeWidth={1.5} /></TrayCell>
        <TrayCell $w={25}>
          <svg width="18" height="16" viewBox="0 0 18 16" fill="none" stroke="#fff"><path d="M1 5.5h3l4-4v13l-4-4H1zM11 5a4 4 0 0 1 0 6M13.5 3a7 7 0 0 1 0 10" /></svg>
        </TrayCell>
        <TrayCell $w={25}>
          <svg width="16" height="18" viewBox="0 0 16 18"><circle cx="8" cy="9" r="7.5" fill="#cfe3d8" /><path d="M8 2a7 7 0 0 1 5 12c-2-2-1-4-3-5S8 5 8 2z" fill="#2f6d82" /></svg>
        </TrayCell>
        <TrayCell $w={24}><CloudShape w={17} fill="#c9c9c9" /></TrayCell>
        <TrayCell $w={24}><CloudShape w={17} fill="#1e86d8" /></TrayCell>
        <TrayCell $w={24}>
          <svg width="17" height="14" viewBox="0 0 24 20"><path d="M6 18a5 5 0 0 1-1-9.9A7 7 0 0 1 18 7a5.5 5.5 0 0 1 .5 11z" fill="#fff" /><path d="M11 5h2v7h-2zM11 14h2v2h-2z" fill="#1a1a1a" /></svg>
        </TrayCell>
        <TrayCell $w={35}>ENG</TrayCell>
        <Clock><span>15:53</span><span>18/02/2022</span></Clock>
        <TrayCell $w={41}>
          <svg width="16" height="18" viewBox="0 0 16 18"><path d="M0 1h16v13H6l-3 3v-3H0z" fill="#fff" /><path d="M3 4.5h10M3 7.5h10M3 10.5h6" stroke="#1a1a1a" /></svg>
        </TrayCell>
      </Taskbar>
    </Page>
  );
}
